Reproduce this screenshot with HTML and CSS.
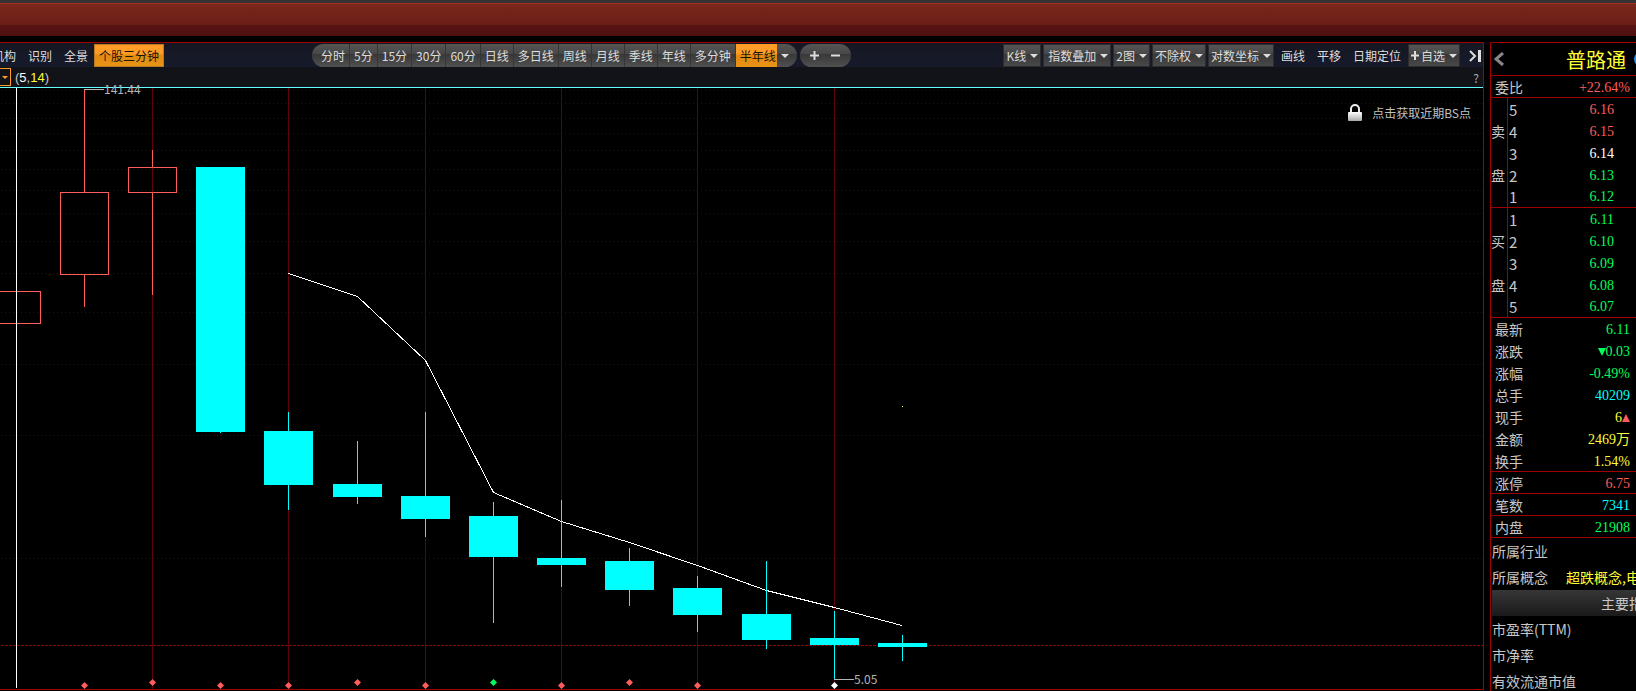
FILE: index.html
```html
<!DOCTYPE html>
<html lang="zh-CN">
<head>
<meta charset="utf-8">
<title>普路通</title>
<link rel="stylesheet" href="styles.css">
</head>
<body>
<header class="titlebar"></header>
<div class="workspace">
  <main class="chart-pane">
    <div class="toolbar">
      <nav class="modes">
        <button class="plain">机构</button>
        <button class="plain">识别</button>
        <button class="plain">全景</button>
        <button class="mode-active">个股三分钟</button>
      </nav>
      <div class="pill periods">
        <button>分时</button><button>5分</button><button>15分</button><button>30分</button><button>60分</button><button>日线</button><button>多日线</button><button>周线</button><button>月线</button><button>季线</button><button>年线</button><button>多分钟</button><button class="selected">半年线</button><button class="more" aria-label="更多周期"><i class="caret"></i></button>
      </div>
      <div class="pill zoom">
        <button aria-label="放大"><svg width="9" height="9"><path d="M4.500 0v9M0 4.500h9" stroke="#ddd" stroke-width="2"/></svg></button>
        <button aria-label="缩小"><svg width="9" height="9"><path d="M0 4.500h9" stroke="#ddd" stroke-width="2"/></svg></button>
      </div>
      <div class="tools">
        <button class="drop">K线<i class="caret"></i></button>
        <button class="drop wide">指数叠加<i class="caret"></i></button>
        <button class="drop">2图<i class="caret"></i></button>
        <button class="drop">不除权<i class="caret"></i></button>
        <button class="drop">对数坐标<i class="caret"></i></button>
        <div class="links">
          <button class="plain">画线</button>
          <button class="plain">平移</button>
          <button class="plain">日期定位</button>
        </div>
        <button class="drop"><svg class="plus" width="8" height="9"><path d="M4 0v9M0 4.500h8" stroke="#ddd" stroke-width="2"/></svg>自选<i class="caret"></i></button>
        <button class="collapse" aria-label="收起侧栏"><svg width="12" height="12"><path d="M1 1l5 5-5 5" fill="none" stroke="#ddd" stroke-width="2"/><path d="M10.500 0v12" stroke="#ddd" stroke-width="3"/></svg></button>
      </div>
    </div>
    <div class="indicator">
      <button class="indicator-pick" aria-label="指标"><i class="caret"></i></button>
      <span class="params">(<b class="white">5</b>,<b class="yellow">14</b>)</span>
      <button class="help">?</button>
    </div>
    <div class="plot">
      <svg class="candles" width="100%" height="100%">
        <g transform="translate(0 -88)" shape-rendering="crispEdges">
          <g class="grid">
            <line x1="1" x2="100%" y1="90.500" y2="90.500"/><line x1="1" x2="100%" y1="103.500" y2="103.500"/>
            <line x1="1" x2="100%" y1="118.500" y2="118.500"/><line x1="1" x2="100%" y1="133.500" y2="133.500"/>
            <line x1="1" x2="100%" y1="150.500" y2="150.500"/><line x1="1" x2="100%" y1="169.500" y2="169.500"/>
            <line x1="1" x2="100%" y1="190.500" y2="190.500"/><line x1="1" x2="100%" y1="213.500" y2="213.500"/>
            <line x1="1" x2="100%" y1="241.500" y2="241.500"/><line x1="1" x2="100%" y1="273.500" y2="273.500"/>
            <line x1="1" x2="100%" y1="312.500" y2="312.500"/><line x1="1" x2="100%" y1="364.500" y2="364.500"/>
            <line x1="1" x2="100%" y1="435.500" y2="435.500"/><line x1="1" x2="100%" y1="558.500" y2="558.500"/>
          </g>
          <path class="periods-grid" d="M152.500 88V689M288.500 88V689M425.500 88V689M561.500 88V689M697.500 88V689M834.500 88V689"/>
          <line class="last-price" x1="1" x2="100%" y1="645.500" y2="645.500"/>
          <path class="up" d="M0 291.500H40.500V323.500H0M60.500 192.500H108.500V274.500H60.500ZM84.500 89V192M84.500 275V307M128.500 167.500H176.500V192.500H128.500ZM152.500 150V167M152.500 193V295"/>
          <polyline class="average" points="288.500,273.500 357.500,296.500 425.500,360.500 493.500,492.500 561.500,521.500 629.500,542.500 697.500,565.500 766.500,590.500 834.500,607.500 902,625.500"/>
          <path class="down" d="M196 167h49v265h-49zM220 432h1v1h-1zM264 431h49v54h-49zM288 412h1v98h-1zM333 484h49v13h-49zM357 441h1v63h-1zM401 496h49v23h-49zM425 412h1v125h-1zM469 516h49v41h-49zM493 502h1v121h-1zM537 558h49v7h-49zM561 500h1v87h-1zM605 561h49v29h-49zM629 548h1v58h-1zM673 588h49v27h-49zM697 576h1v56h-1zM742 614h49v26h-49zM766 561h1v88h-1zM810 638h49v7h-49zM834 611h1v68h-1zM878 643h49v4h-49zM902 635h1v26h-1z"/>
          <path class="cursor" d="M16.500 88V688"/>
          <path class="leader" d="M84 89.500H104M834 679.500H854"/>
          <rect x="902" y="406" width="1" height="1" fill="#ff3"/>
        </g>
        <g transform="translate(0 -88)">
          <path class="mark-red" d="M84.500 682l3.500 3.500-3.500 3.500-3.500-3.500zM152.500 679l3.500 3.500-3.500 3.500-3.500-3.500zM220.500 682l3.500 3.500-3.500 3.500-3.500-3.500zM288.500 682l3.500 3.500-3.500 3.500-3.500-3.500zM357.500 679l3.500 3.500-3.500 3.500-3.500-3.500zM425.500 682l3.500 3.500-3.500 3.500-3.500-3.500zM561.500 682l3.500 3.500-3.500 3.500-3.500-3.500zM629.500 679l3.500 3.500-3.500 3.500-3.500-3.500zM697.500 682l3.500 3.500-3.500 3.500-3.500-3.500z"/>
          <path fill="#00ff5a" d="M493.500 679l3.500 3.500-3.500 3.500-3.500-3.500z"/>
          <path fill="#fff" d="M834.500 682l3.500 3.500-3.500 3.500-3.500-3.500z"/>
          <text x="104" y="94">141.44</text>
          <text x="854" y="684">5.05</text>
        </g>
      </svg>
      <button class="bs-hint">
        <svg width="14" height="17" viewBox="0 0 14 17">
          <defs><linearGradient id="lock" x2="0" y2="1"><stop stop-color="#fff"/><stop offset="1" stop-color="#aaa"/></linearGradient></defs>
          <path d="M3 9V5a4 4 0 0 1 8 0v4" fill="none" stroke="#eee" stroke-width="2"/>
          <rect y="8" width="14" height="9" rx="1" fill="url(#lock)"/>
        </svg>
        点击获取近期BS点
      </button>
    </div>
  </main>
  <aside class="quote">
    <div class="stock">
      <button class="back" aria-label="返回"><svg width="10" height="14"><path d="M9 1L2 7l7 6" fill="none" stroke="#888" stroke-width="3"/></svg></button>
      <h1>普路通</h1>
      <i class="badge"></i>
    </div>
    <table class="figures">
      <tr class="ruled"><th>委比</th><td class="red">+22.64%</td></tr>
    </table>
    <section class="ladder">
      <div class="side"><span>卖</span><span>盘</span></div>
      <table>
        <tr><th>5</th><td class="red">6.16</td></tr>
        <tr><th>4</th><td class="red">6.15</td></tr>
        <tr><th>3</th><td class="white">6.14</td></tr>
        <tr><th>2</th><td class="green">6.13</td></tr>
        <tr><th>1</th><td class="green">6.12</td></tr>
      </table>
    </section>
    <section class="ladder">
      <div class="side"><span>买</span><span>盘</span></div>
      <table>
        <tr><th>1</th><td class="green">6.11</td></tr>
        <tr><th>2</th><td class="green">6.10</td></tr>
        <tr><th>3</th><td class="green">6.09</td></tr>
        <tr><th>4</th><td class="green">6.08</td></tr>
        <tr><th>5</th><td class="green">6.07</td></tr>
      </table>
    </section>
    <table class="figures">
      <tr><th>最新</th><td class="green">6.11</td></tr>
      <tr><th>涨跌</th><td class="green"><i class="arrow fall"></i>0.03</td></tr>
      <tr><th>涨幅</th><td class="green">-0.49%</td></tr>
      <tr><th>总手</th><td class="cyan">40209</td></tr>
      <tr><th>现手</th><td class="yellow">6<i class="arrow rise"></i></td></tr>
      <tr><th>金额</th><td class="yellow">2469万</td></tr>
      <tr class="ruled"><th>换手</th><td class="yellow">1.54%</td></tr>
      <tr class="ruled"><th>涨停</th><td class="red">6.75</td></tr>
      <tr class="ruled"><th>笔数</th><td class="cyan">7341</td></tr>
      <tr class="ruled"><th>内盘</th><td class="green">21908</td></tr>
    </table>
    <dl class="profile">
      <div><dt>所属行业</dt></div>
      <div><dt>所属概念</dt><dd class="yellow">超跌概念,电商</dd></div>
    </dl>
    <h2>主要指标</h2>
    <dl class="profile">
      <div><dt>市盈率(TTM)</dt></div>
      <div><dt>市净率</dt></div>
      <div><dt>有效流通市值</dt></div>
    </dl>
  </aside>
</div>
</body>
</html>
```
FILE: styles.css
```css
* { box-sizing: border-box; }

body {
  margin: 0;
  height: 100vh;
  display: flex;
  flex-direction: column;
  overflow: hidden;
  background: #000;
  color: #c8c8c8;
  font: 12px "Noto Sans CJK SC", sans-serif;
}

button {
  margin: 0;
  padding: 0;
  border: 0;
  background: none;
  color: #ddd;
  font: inherit;
  white-space: nowrap;
}

b, i { font-weight: normal; font-style: normal; }
svg { display: block; flex: none; }

.titlebar {
  flex: none;
  height: 36px;
  border-top: 3px solid #333;
  background: linear-gradient(#7c271b, #6a1e18 66%, #581414 67%, #501010);
  box-shadow: inset 0 1px #a03022;
}

.workspace {
  flex: 1;
  min-height: 0;
  display: flex;
  gap: 6px;
  padding-top: 6px;
}

.chart-pane {
  flex: 1;
  min-width: 0;
  display: flex;
  flex-direction: column;
  margin-bottom: 1px;
  border: solid #a00000;
  border-width: 1px 1px 1px 0;
  overflow: hidden;
}

.toolbar {
  flex: none;
  height: 24px;
  display: flex;
  align-items: stretch;
  padding-top: 1px;
  background: linear-gradient(#151722, #171a2b);
}

.modes { display: flex; gap: 12px; margin-left: -8px; }
.modes .mode-active {
  margin-left: -6px;
  padding: 0 4px;
  border: 1px solid #b87820;
  background: linear-gradient(#ff9c28 40%, #e08a10 50%, #e89418);
  color: #1c1408;
}

.pill {
  display: flex;
  overflow: hidden;
  border-radius: 12px;
  background: linear-gradient(#555, #484848 42%, #383838 44%, #505050);
}
.periods { margin-left: 148px; }
.periods button { padding: 0 4px; border-right: 1px solid #363636; }
.periods button:first-child { padding-left: 9px; }
.periods .selected {
  padding-right: 1px;
  border-right: 0;
  background: linear-gradient(#ff9c28 40%, #e08a10 50%, #e89418);
  color: #1c1408;
}
.periods .more {
  display: flex;
  align-items: center;
  padding: 0 8px 0 4px;
  border: 0;
}

.zoom { gap: 12px; margin-left: 3px; padding: 0 11px 0 10px; }

.caret {
  display: inline-block;
  border: 4px solid transparent;
  border-top-color: #ddd;
  border-bottom: 0;
}

.tools { display: flex; gap: 2px; margin-left: auto; }
.drop {
  display: flex;
  align-items: center;
  gap: 4px;
  padding: 0 2px;
  border: 1px solid #2c2c30;
  background: linear-gradient(#555, #484848 42%, #383838 44%, #484848);
}
.wide { padding-left: 4px; }
.plus { margin-right: -2px; }
.links { display: flex; gap: 12px; padding: 0 5px; }
.collapse { padding: 0 2px 0 7px; }

.indicator {
  flex: none;
  height: 20px;
  display: flex;
  align-items: center;
  background: #121318;
}
.indicator-pick {
  width: 11px;
  height: 18px;
  border: 1px solid #ff9c28;
  border-left: 0;
  display: flex;
  align-items: center;
  justify-content: center;
}
.indicator-pick .caret { border-width: 3px 3px 0; border-top-color: #ff9c28; }
.params { margin-left: 4px; font: 13px "Liberation Sans", sans-serif; }
.help { margin: 0 4px 0 auto; font-size: 12px; color: #aaa; }

.plot {
  flex: 1;
  min-height: 0;
  position: relative;
  border-top: 1px solid #6ff;
}
.candles { overflow: visible; }
.candles text { fill: #b4b4b4; font: 12px "Noto Sans CJK SC", sans-serif; }
.grid line { stroke: #500008; stroke-dasharray: 1 3; }
.periods-grid { stroke: #600008; }
.last-price { stroke: #a00000; stroke-dasharray: 3 1; }
.up { fill: none; stroke: #ff5c5c; }
.down { fill: #0ff; }
.average { fill: none; stroke: #fff; }
.cursor { stroke: #fff; }
.leader { stroke: #b4b4b4; }
.mark-red { fill: #ff5c5c; }

.bs-hint {
  position: absolute;
  top: 16px;
  right: 12px;
  display: flex;
  align-items: center;
  gap: 10px;
  color: #c0c0c0;
}

.quote {
  flex: none;
  width: 146px;
  border: solid #a00000;
  border-width: 1px 0 0 1px;
  overflow: hidden;
  font-size: 14px;
}

.stock {
  height: 33px;
  display: flex;
  align-items: center;
  padding-left: 3px;
  border-bottom: 1px solid #a00000;
}
.stock h1 {
  margin: 0 8px 0 62px;
  color: #ff3;
  font-size: 20px;
  font-weight: normal;
  white-space: nowrap;
}
.badge {
  flex: none;
  width: 14px;
  height: 14px;
  border-radius: 50%;
  background: #2090f0;
}

table { width: 100%; border-collapse: collapse; }
tr { height: 22px; }
th, td { padding: 0; line-height: 21px; white-space: nowrap; }
th { font-weight: normal; text-align: left; }
td { font-family: "Liberation Serif", "Noto Sans CJK SC", serif; text-align: right; }

.figures { border-collapse: separate; border-spacing: 0; }
.figures th { padding-left: 4px; }
.figures td { padding-right: 6px; }
.ruled th, .ruled td {
  padding-top: 2px;
  border-bottom: 1px solid #a00000;
  line-height: 19px;
}

.ladder { display: flex; border-bottom: 1px solid #a00000; }
.side {
  flex: none;
  width: 17px;
  display: flex;
  flex-direction: column;
  justify-content: center;
  gap: 24px;
  border-right: 1px solid #a00000;
  line-height: 20px;
}
.ladder tr:last-child { height: 21px; }
.ladder th { padding-left: 1px; font-size: 15px; }
.ladder td { padding-right: 22px; }

.arrow { display: inline-block; border: 4px solid transparent; }
.fall { border-top: 8px solid; border-bottom: 0; }
.rise { border-bottom: 8px solid #ff5c5c; border-top: 0; }

.profile { margin: 0; }
.profile div {
  height: 26px;
  display: flex;
  padding-left: 1px;
  line-height: 26px;
  white-space: nowrap;
}
.profile dd { margin: 0 0 0 18px; }
h2 {
  height: 26px;
  margin: 0 0 0 1px;
  padding-left: 109px;
  background: linear-gradient(#363636, #1a1a1a);
  font-size: 14px;
  font-weight: normal;
  line-height: 26px;
  white-space: nowrap;
}

.red { color: #ff5c5c; }
.green { color: #00ff5a; }
.cyan { color: #0ff; }
.yellow { color: #ff3; }
.white { color: #fff; }
```
